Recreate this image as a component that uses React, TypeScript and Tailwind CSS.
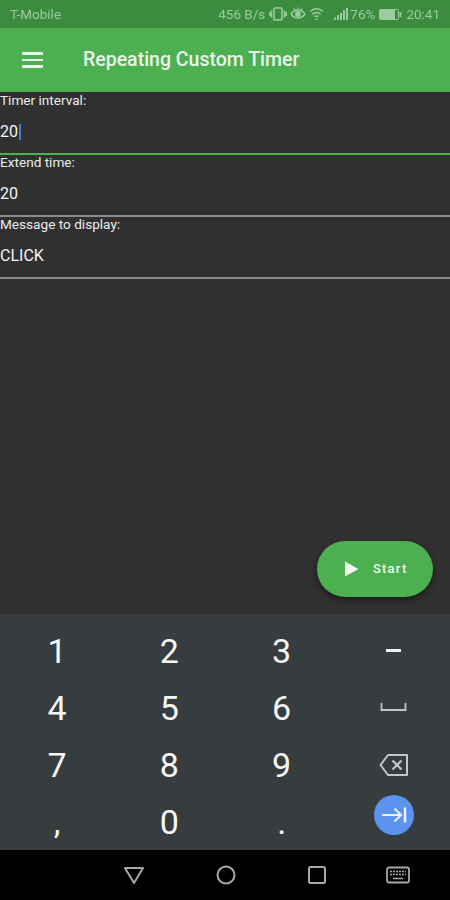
const fields = [
  { label: 'Timer interval:', value: '20', focused: true },
  { label: 'Extend time:', value: '20', focused: false },
  { label: 'Message to display:', value: 'CLICK', focused: false },
]

const digits = ['1', '2', '3', '4', '5', '6', '7', '8', '9', ',', '0', '.']

function StatusBar() {
  return (
    <div className="flex h-[28px] shrink-0 items-center justify-between bg-[#3c8c40] px-[10px] text-[13.500px] text-[#9ccb9f] blur-[0.3px]">
      <span>T-Mobile</span>
      <div className="flex items-center">
        <span>456 B/s</span>
        {/* vibrate */}
        <svg className="ml-[4px]" width="18" height="14" viewBox="0 0 18 14" fill="none" stroke="currentColor" strokeWidth="1.600">
          <rect x="5" y="1" width="8" height="12" rx="1" />
          <path d="M2.500 3.500v7M15.500 3.500v7M0.800 5v4M17.200 5v4" />
        </svg>
        {/* eye comfort */}
        <svg className="ml-[3px]" width="16" height="14" viewBox="0 0 16 14" fill="none" stroke="currentColor" strokeWidth="1.500">
          <path d="M1 7C3 4 5.500 3 8 3s5 1 7 4c-2 3-4.500 4-7 4S3 10 1 7z" />
          <circle cx="8" cy="7" r="2.200" fill="currentColor" />
          <path d="M4 1.500l1 1.500M8 0.500v2M12 1.500l-1 1.500" strokeWidth="1.200" />
        </svg>
        {/* wifi */}
        <svg className="ml-[3px]" width="15" height="14" viewBox="0 0 15 14" fill="none" stroke="currentColor" strokeWidth="1.400">
          <path d="M1 4.500C5 1 10 1 14 4.500M3.200 7.300C5.800 5 9.200 5 11.800 7.300M5.500 9.800C6.800 8.800 8.200 8.800 9.500 9.800" />
          <circle cx="7.500" cy="12" r="1" fill="currentColor" stroke="none" />
        </svg>
        {/* signal */}
        <svg className="ml-[10px]" width="14" height="14" viewBox="0 0 14 14" fill="currentColor">
          <rect x="0" y="10.500" width="2" height="2.500" />
          <rect x="3" y="8" width="2" height="5" />
          <rect x="6" y="6" width="2" height="7" />
          <rect x="9" y="3" width="2" height="10" />
          <rect x="12" y="1" width="2" height="12" />
        </svg>
        <span className="ml-[2px]">76%</span>
        {/* battery */}
        <svg className="ml-[4px]" width="23" height="11" viewBox="0 0 23 11" fill="none">
          <rect x="0.500" y="0.500" width="19" height="10" rx="1" stroke="currentColor" />
          <rect x="1" y="1" width="15" height="9" fill="currentColor" />
          <rect x="20.500" y="3" width="1.800" height="5" fill="currentColor" />
        </svg>
        <span className="ml-[4px]">20:41</span>
      </div>
    </div>
  )
}

function AppBar() {
  return (
    <div className="flex h-[64px] shrink-0 items-center bg-[#4caf50] text-[#e9f5ea]">
      <div className="ml-[22px] flex w-[21px] flex-col gap-[4px]">
        <div className="h-[2.500px] bg-[#e9f5ea]" />
        <div className="h-[2.500px] bg-[#e9f5ea]" />
        <div className="h-[2.500px] bg-[#e9f5ea]" />
      </div>
      <h1 className="ml-[40px] text-[19.500px] font-medium">Repeating Custom Timer</h1>
    </div>
  )
}

function Field({ label, value, focused }: { label: string; value: string; focused: boolean }) {
  return (
    <div className={`h-[62px] border-b-2 ${focused ? 'border-[#4caf50]' : 'border-[#8a8a8a]'}`}>
      <div className="text-[13.600px] leading-[14px] text-[#ececec]">{label}</div>
      <div className="mt-[16px] flex h-[18px] items-center text-[16px] text-[#f5f5f5]">
        {value}
        {focused && <span className="ml-[1px] h-[16px] w-[2px] bg-[#3f7fd0]" />}
      </div>
    </div>
  )
}

function Key({ label }: { label: string }) {
  return <div className="flex items-center justify-center text-[34px] leading-none">{label}</div>
}

function NumberPad() {
  return (
    <div className="grid h-[236px] shrink-0 grid-cols-4 grid-rows-[repeat(4,57px)] bg-[#373c3f] pl-[1px] pt-[8px] text-[#f5f5f5]">
      {digits.slice(0, 3).map((d) => (
        <Key key={d} label={d} />
      ))}
      <div className="flex items-center justify-center">
        <div className="h-[3px] w-[15px] bg-[#f0f0f0]" />
      </div>
      {digits.slice(3, 6).map((d) => (
        <Key key={d} label={d} />
      ))}
      <div className="flex items-center justify-center">
        <svg className="mt-[-2px]" width="27" height="10" viewBox="0 0 27 10" fill="none" stroke="#c4c6c7" strokeWidth="1.800">
          <path d="M1.500 1v7h24V1" />
        </svg>
      </div>
      {digits.slice(6, 9).map((d) => (
        <Key key={d} label={d} />
      ))}
      <div className="flex items-center justify-center">
        <svg width="30" height="24" viewBox="0 0 30 24" fill="none" stroke="#c4c6c7" strokeWidth="2" strokeLinejoin="round">
          <path d="M9 2h19v20H9L1.500 12z" />
          <path d="M13.500 7.500l9 9M22.500 7.500l-9 9" strokeWidth="2.200" />
        </svg>
      </div>
      {digits.slice(9).map((d) => (
        <Key key={d} label={d} />
      ))}
      <div className="flex items-center justify-center">
        <div className="mt-[-14px] flex h-[40px] w-[40px] items-center justify-center rounded-full bg-[#5b93ee]">
          <svg width="26" height="18" viewBox="0 0 26 18" fill="none" stroke="#e8eefa" strokeWidth="2">
            <path d="M1 9h19M13.500 2.500L20 9l-6.500 6.500" />
            <path d="M24 1.500v15" strokeWidth="2.500" />
          </svg>
        </div>
      </div>
    </div>
  )
}

function NavBar() {
  return (
    <div className="flex h-[50px] shrink-0 items-center bg-black pl-[123px]">
      <svg width="22" height="20" viewBox="0 0 22 20" fill="none" stroke="#a8a8a8" strokeWidth="2" strokeLinejoin="round">
        <path d="M2 3h18l-9 15z" />
      </svg>
      <svg className="ml-[71px]" width="20" height="20" viewBox="0 0 20 20" fill="none" stroke="#a8a8a8" strokeWidth="2">
        <circle cx="10" cy="10" r="8.500" />
      </svg>
      <svg className="ml-[72px]" width="18" height="18" viewBox="0 0 18 18" fill="none" stroke="#a8a8a8" strokeWidth="2">
        <rect x="1" y="1" width="16" height="16" rx="1.500" />
      </svg>
      <svg className="ml-[60px]" width="24" height="18" viewBox="0 0 24 18" fill="none" stroke="#a8a8a8">
        <rect x="1" y="1.500" width="22" height="15" rx="2" strokeWidth="1.800" />
        <path d="M4 5.500h16M4 8.500h16" strokeWidth="1.400" strokeDasharray="2 1" />
        <path d="M7 12.500h10" strokeWidth="1.500" />
      </svg>
    </div>
  )
}

export default function App() {
  return (
    <div className="flex h-[900px] w-[450px] flex-col overflow-hidden bg-[#303030] font-['Roboto',sans-serif]">
      <StatusBar />
      <AppBar />
      <main className="flex flex-1 flex-col pt-[1px]">
        {fields.map((f) => (
          <Field key={f.label} {...f} />
        ))}
        <button className="mt-auto mb-[17px] mr-[17px] flex h-[56px] w-[116px] items-center self-end rounded-full bg-[#4caf50] pl-[27px] text-[#f0f8f0] shadow-[0_3px_6px_rgba(0,0,0,0.45)]">
          <svg width="15" height="16" viewBox="0 0 15 16" fill="currentColor">
            <path d="M1 0.500L14.500 8 1 15.500z" />
          </svg>
          <span className="ml-[14px] text-[13px] font-medium tracking-[1.200px]">Start</span>
        </button>
      </main>
      <NumberPad />
      <NavBar />
    </div>
  )
}
